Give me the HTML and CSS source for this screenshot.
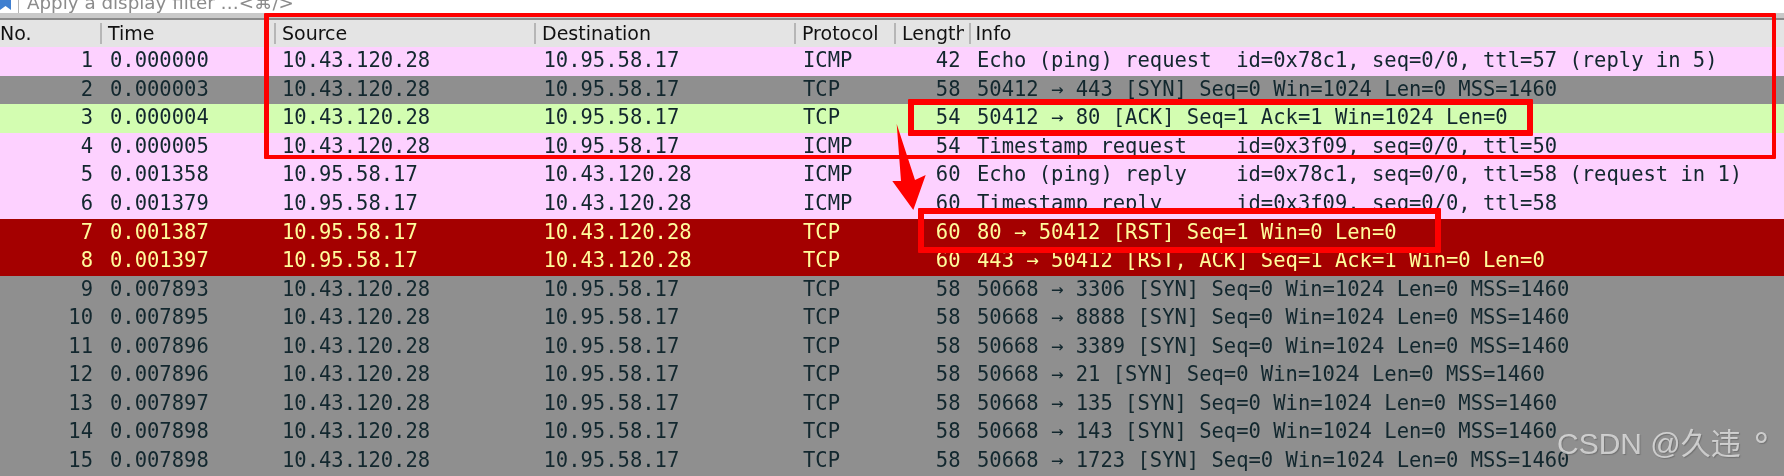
FILE: index.html
```html
<!DOCTYPE html>
<html lang="en">
<head>
<meta charset="utf-8">
<title>Wireshark capture</title>
<link rel="stylesheet" href="styles.css">
</head>
<body>
<div class="screen">
  <div class="filterbar">
    <svg class="bookmark" viewBox="0 0 12 10" width="12" height="10"><path d="M0 0H11V10L5.5 6 0 10Z" fill="#3f7fd0"/></svg>
    <span class="filter-sep"></span>
    <span class="filter-text">Apply a display filter …&lt;⌘/&gt;</span>
  </div>
  <div class="gutter"></div>
  <div class="head">
    <span class="h no">No.</span><span class="h">Time</span><span class="h">Source</span><span class="h">Destination</span><span class="h">Protocol</span><span class="h">Length</span><span class="h info">Info</span>
  </div>
  <div class="row icmp"><span class="no">1</span><span>0.000000</span><span>10.43.120.28</span><span>10.95.58.17</span><span>ICMP</span><span class="len">42</span><span>Echo (ping) request  id=0x78c1, seq=0/0, ttl=57 (reply in 5)</span></div>
  <div class="row gray"><span class="no">2</span><span>0.000003</span><span>10.43.120.28</span><span>10.95.58.17</span><span>TCP</span><span class="len">58</span><span>50412 → 443 [SYN] Seq=0 Win=1024 Len=0 MSS=1460</span></div>
  <div class="row green"><span class="no">3</span><span>0.000004</span><span>10.43.120.28</span><span>10.95.58.17</span><span>TCP</span><span class="len">54</span><span>50412 → 80 [ACK] Seq=1 Ack=1 Win=1024 Len=0</span></div>
  <div class="row icmp"><span class="no">4</span><span>0.000005</span><span>10.43.120.28</span><span>10.95.58.17</span><span>ICMP</span><span class="len">54</span><span>Timestamp request    id=0x3f09, seq=0/0, ttl=50</span></div>
  <div class="row icmp"><span class="no">5</span><span>0.001358</span><span>10.95.58.17</span><span>10.43.120.28</span><span>ICMP</span><span class="len">60</span><span>Echo (ping) reply    id=0x78c1, seq=0/0, ttl=58 (request in 1)</span></div>
  <div class="row icmp"><span class="no">6</span><span>0.001379</span><span>10.95.58.17</span><span>10.43.120.28</span><span>ICMP</span><span class="len">60</span><span>Timestamp reply      id=0x3f09, seq=0/0, ttl=58</span></div>
  <div class="row red"><span class="no">7</span><span>0.001387</span><span>10.95.58.17</span><span>10.43.120.28</span><span>TCP</span><span class="len">60</span><span>80 → 50412 [RST] Seq=1 Win=0 Len=0</span></div>
  <div class="row red"><span class="no">8</span><span>0.001397</span><span>10.95.58.17</span><span>10.43.120.28</span><span>TCP</span><span class="len">60</span><span>443 → 50412 [RST, ACK] Seq=1 Ack=1 Win=0 Len=0</span></div>
  <div class="row gray"><span class="no">9</span><span>0.007893</span><span>10.43.120.28</span><span>10.95.58.17</span><span>TCP</span><span class="len">58</span><span>50668 → 3306 [SYN] Seq=0 Win=1024 Len=0 MSS=1460</span></div>
  <div class="row gray"><span class="no">10</span><span>0.007895</span><span>10.43.120.28</span><span>10.95.58.17</span><span>TCP</span><span class="len">58</span><span>50668 → 8888 [SYN] Seq=0 Win=1024 Len=0 MSS=1460</span></div>
  <div class="row gray"><span class="no">11</span><span>0.007896</span><span>10.43.120.28</span><span>10.95.58.17</span><span>TCP</span><span class="len">58</span><span>50668 → 3389 [SYN] Seq=0 Win=1024 Len=0 MSS=1460</span></div>
  <div class="row gray"><span class="no">12</span><span>0.007896</span><span>10.43.120.28</span><span>10.95.58.17</span><span>TCP</span><span class="len">58</span><span>50668 → 21 [SYN] Seq=0 Win=1024 Len=0 MSS=1460</span></div>
  <div class="row gray"><span class="no">13</span><span>0.007897</span><span>10.43.120.28</span><span>10.95.58.17</span><span>TCP</span><span class="len">58</span><span>50668 → 135 [SYN] Seq=0 Win=1024 Len=0 MSS=1460</span></div>
  <div class="row gray"><span class="no">14</span><span>0.007898</span><span>10.43.120.28</span><span>10.95.58.17</span><span>TCP</span><span class="len">58</span><span>50668 → 143 [SYN] Seq=0 Win=1024 Len=0 MSS=1460</span></div>
  <div class="row gray"><span class="no">15</span><span>0.007898</span><span>10.43.120.28</span><span>10.95.58.17</span><span>TCP</span><span class="len">58</span><span>50668 → 1723 [SYN] Seq=0 Win=1024 Len=0 MSS=1460</span></div>

  <div class="box box-main"></div>
  <div class="box box-ack"></div>
  <div class="box box-rst"></div>
  <svg class="arrow" viewBox="0 0 40 90" width="40" height="90"><path d="M6.7 2L25 58L35.7 53L23.3 88L2.3 59L11 59Z" fill="#fe0000"/></svg>
  <div class="mark">CSDN @久违<span class="deg">°</span></div>
</div>
</body>
</html>
```
FILE: styles.css
```css
html, body { margin: 0; padding: 0; background: #fff; }
.screen { position: relative; width: 1784px; height: 476px; overflow: hidden; filter: blur(0.4px); }

.filterbar { height: 13px; display: flex; align-items: flex-end; overflow: hidden; background: #fff; }
.bookmark { flex: none; margin-bottom: 3px; }
.filter-sep { flex: none; width: 1px; height: 13px; margin-left: 6px; background: #b5b5b5; }
.filter-text { flex: none; margin-left: 8px; font: 18.3px/20px "DejaVu Sans", sans-serif; color: #8b8b8b; white-space: pre; }

.gutter { height: 7px; box-sizing: border-box; background: #c9c9c9; border-bottom: 2px solid #8a8a8a; }

.head { display: grid; grid-template-columns: 100px 174px 260px 260px 100px 69.5px 1fr; height: 27.3px; background: #e4e4e4; color: #111; }
.h { height: 21px; margin-top: 3px; box-sizing: border-box; padding-left: 6px; border-left: 2px solid #b6b6b6; font: 19px/20px "DejaVu Sans", sans-serif; white-space: pre; overflow: hidden; }
.h.no { border-left: 0; padding-left: 0; }
.h.info { margin-left: 5px; padding-left: 5px; }

.row { display: grid; grid-template-columns: 110px 172px 261.5px 259.5px 100px 74px 1fr; height: 28.55px; font: 20.5px/27px "DejaVu Sans Mono", monospace; white-space: pre; overflow: hidden; }
.no { text-align: right; padding-right: 17px; }
.len { text-align: right; padding-right: 16.5px; }
.h.no { text-align: left; }

.icmp { background: #fdd1ff; color: #12272e; }
.gray { background: #8f8f8f; color: #12272e; }
.green { background: #d3fdb1; color: #12272e; }
.red { background: #a40000; color: #fffc9c; }

.box { position: absolute; box-sizing: border-box; border: 6px solid #fe0000; border-radius: 1px; }
.box-main { left: 264px; top: 13px; width: 1512px; height: 146px; border-width: 4px 4px 4px 5px; }
.box-ack { left: 908px; top: 99px; width: 625px; height: 37px; }
.box-rst { left: 918px; top: 208px; width: 523px; height: 45px; }
.arrow { position: absolute; left: 890px; top: 122px; }
.mark { position: absolute; left: 1557px; top: 425px; font: 30px/38px "Liberation Sans", "Noto Sans CJK SC", sans-serif; color: rgba(235, 235, 235, 0.72); text-shadow: 1px 1px 1px rgba(60, 60, 60, 0.35); white-space: pre; }
.deg { margin-left: 13px; font-size: 38px; line-height: 0; vertical-align: -5px; }
```
